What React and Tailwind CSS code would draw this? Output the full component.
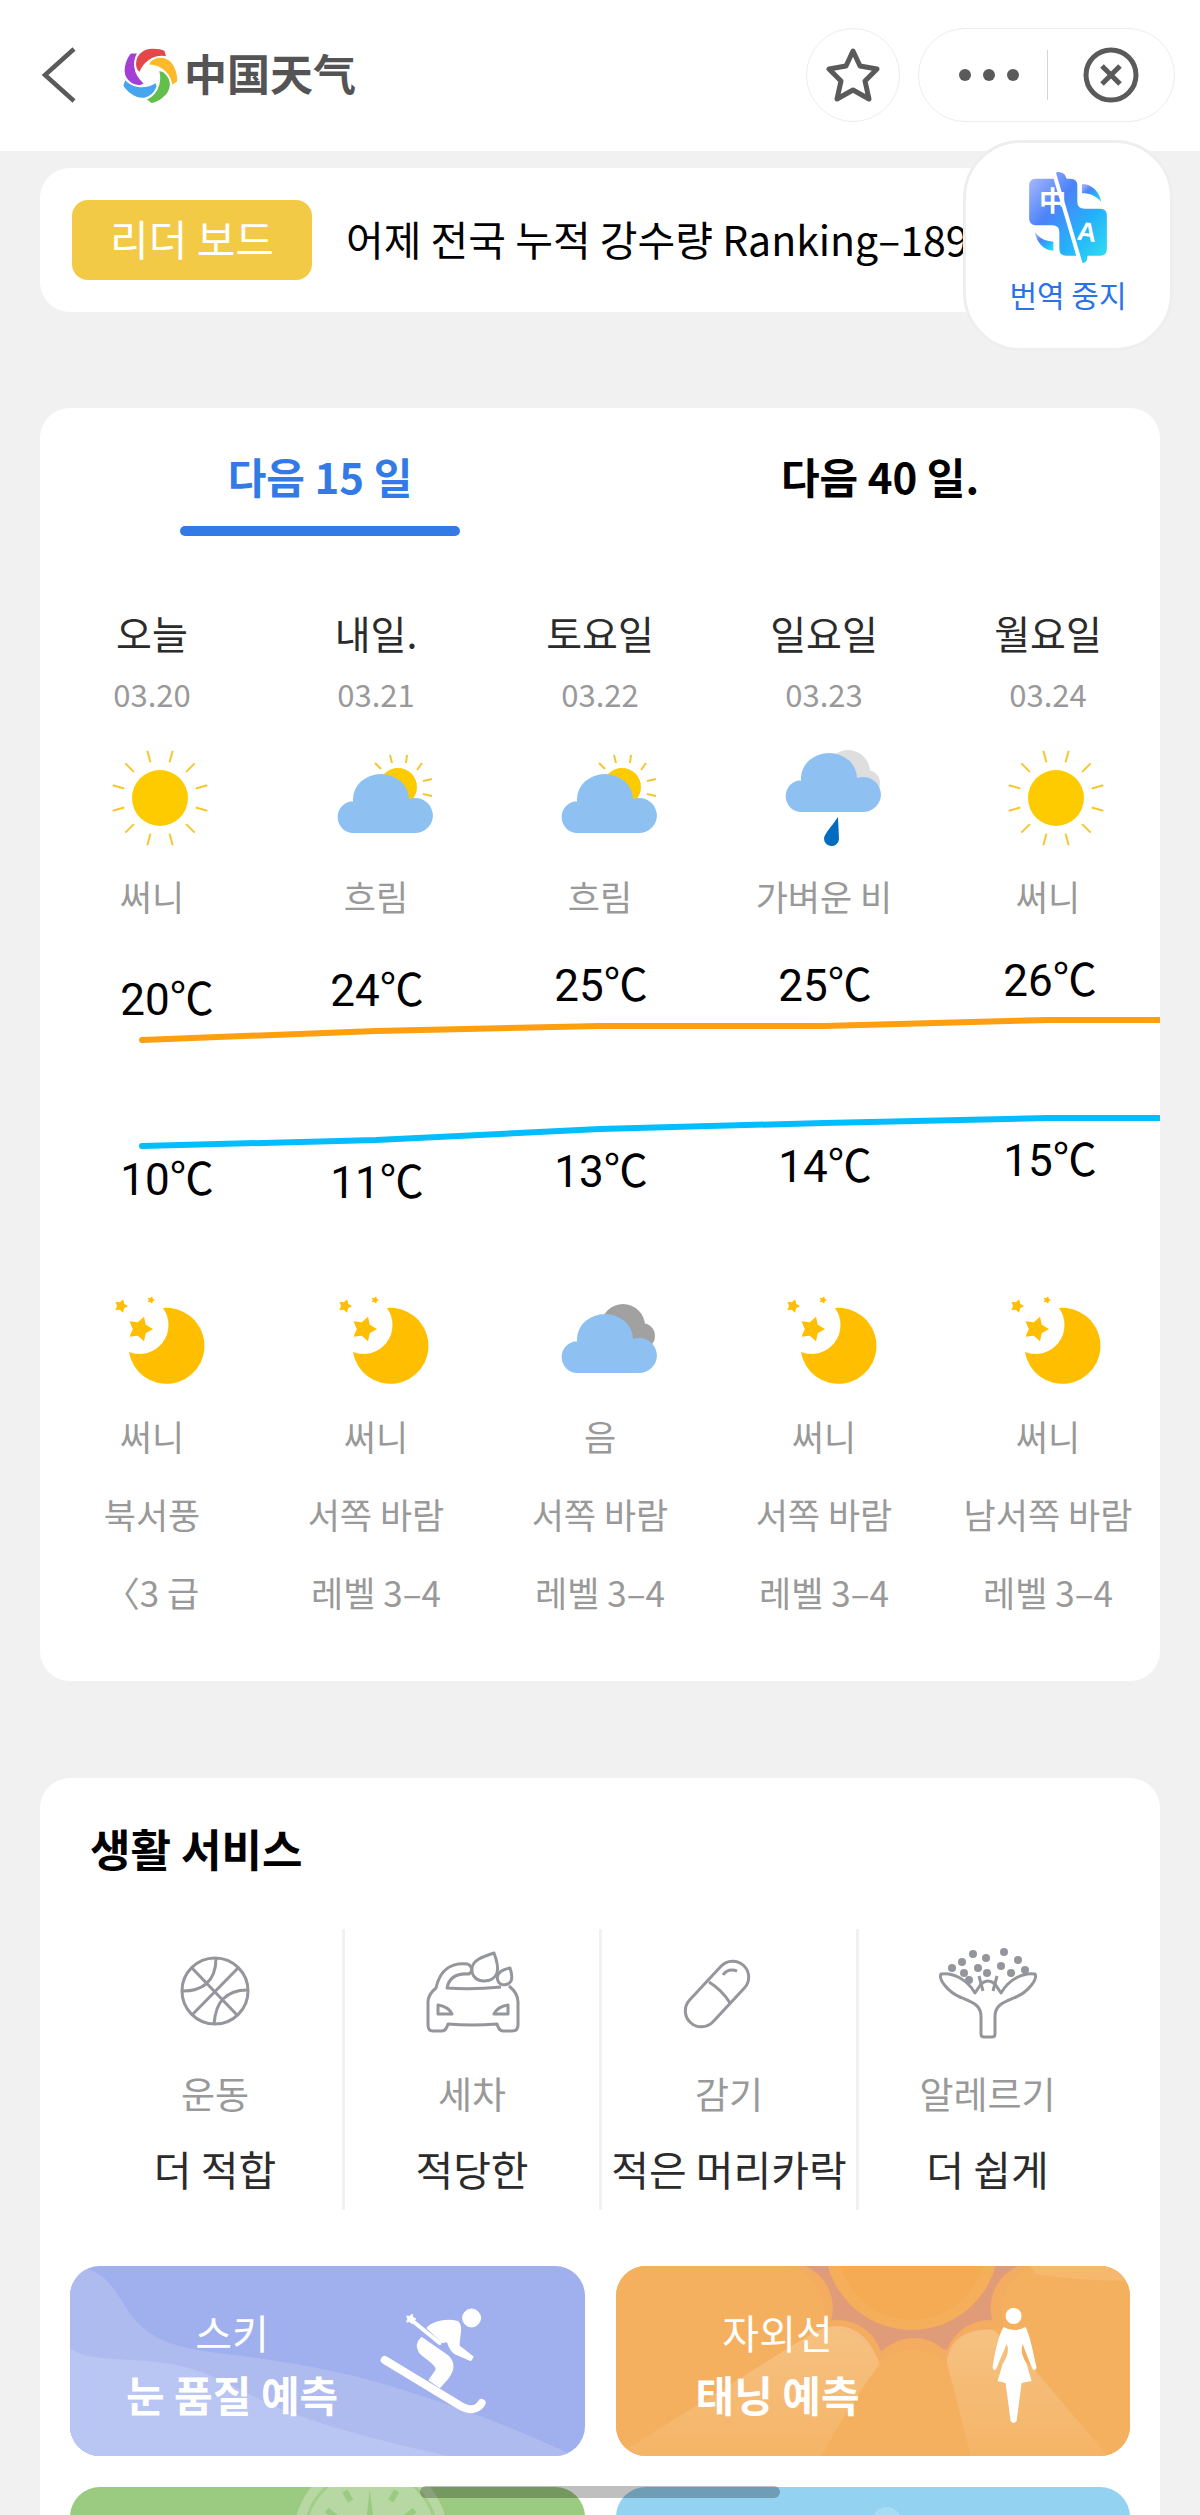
import { useState } from "react";

const days = [
  { name: "오늘", date: "03.20", icon: "sunny", text: "써니", night: "moon", nightText: "써니", wind: "북서풍", level: "〈3 급" },
  { name: "내일.", date: "03.21", icon: "cloudy", text: "흐림", night: "moon", nightText: "써니", wind: "서쪽 바람", level: "레벨 3–4" },
  { name: "토요일", date: "03.22", icon: "cloudy", text: "흐림", night: "overcast", nightText: "음", wind: "서쪽 바람", level: "레벨 3–4" },
  { name: "일요일", date: "03.23", icon: "rain", text: "가벼운 비", night: "moon", nightText: "써니", wind: "서쪽 바람", level: "레벨 3–4" },
  { name: "월요일", date: "03.24", icon: "sunny", text: "써니", night: "moon", nightText: "써니", wind: "남서쪽 바람", level: "레벨 3–4" },
];

const highs = [
  { x: 127, y: 85, label: "20℃" },
  { x: 337, y: 76, label: "24℃" },
  { x: 561, y: 71, label: "25℃" },
  { x: 785, y: 71, label: "25℃" },
  { x: 1010, y: 66, label: "26℃" },
];

const lows = [
  { x: 127, y: 265, label: "10℃" },
  { x: 337, y: 268, label: "11℃" },
  { x: 561, y: 257, label: "13℃" },
  { x: 785, y: 252, label: "14℃" },
  { x: 1010, y: 246, label: "15℃" },
];

const services = [
  { icon: "ball", name: "운동", value: "더 적합" },
  { icon: "car", name: "세차", value: "적당한" },
  { icon: "pill", name: "감기", value: "적은 머리카락" },
  { icon: "plant", name: "알레르기", value: "더 쉽게" },
];

const CLOUD =
  "M16 83 A16 16 0 0 1 14 51.500 H17 V49 A28 25 0 0 1 73 49 A18 17.500 0 1 1 78 83 Z";

function starPoints(cx, cy, r) {
  const points = [];
  for (let i = 0; i < 10; i++) {
    const radius = i % 2 === 0 ? r : r * 0.55;
    const angle = (i * Math.PI) / 5;
    points.push(`${cx + radius * Math.cos(angle)},${cy + radius * Math.sin(angle)}`);
  }
  return points.join(" ");
}

function Sunny() {
  return (
    <>
      <circle cx="48" cy="48" r="28" fill="#fecb00" />
      {[15, 45, 75, 105, 135, 165, 195, 225, 255, 285, 315, 345].map((a) => (
        <path key={a} d="M85 48 H97" stroke="#f5c72e" strokeWidth="2" transform={`rotate(${a} 48 48)`} />
      ))}
    </>
  );
}

function Cloudy() {
  return (
    <>
      <circle cx="62" cy="37" r="19" fill="#fecb00" />
      <path
        d="M39 13 L45 19 M54 5 L56 13 M71 5 L70 13 M86 13 L81 20 M96 29 L87 31 M96 46 L87 44"
        stroke="#f5c72e"
        strokeWidth="2"
      />
      <path d={CLOUD} fill="#8ec1f1" />
    </>
  );
}

function Rain() {
  return (
    <>
      <circle cx="64" cy="22" r="22" fill="#dedede" />
      <circle cx="83" cy="33" r="13" fill="#dedede" />
      <path d={CLOUD} fill="#8ec1f1" transform="translate(0 -21)" />
      <path d="M54 67 L55 89 A7.500 7.500 0 0 1 40 88 C41 83 48 76 54 67 Z" fill="#026dc0" />
    </>
  );
}

function Overcast() {
  return (
    <>
      <circle cx="63" cy="36" r="22" fill="#a1a1a1" />
      <circle cx="82" cy="46" r="13" fill="#a1a1a1" />
      <path d={CLOUD} fill="#8ec1f1" />
    </>
  );
}

function Moon() {
  return (
    <g fill="#ffbf00">
      <path d="M51 18 A38 38 0 1 1 17 62 A29 29 0 0 0 51 18 Z" />
      <polygon points={starPoints(28, 39, 13)} />
      <polygon points={starPoints(9, 16, 7)} />
      <polygon points={starPoints(39, 10, 4)} />
    </g>
  );
}

const weatherIcons = {
  sunny: Sunny,
  cloudy: Cloudy,
  rain: Rain,
  overcast: Overcast,
  moon: Moon,
};

function WeatherIcon({ type }) {
  const Shape = weatherIcons[type];
  return (
    <svg viewBox="0 0 96 96" className="ml-4 size-24 overflow-visible" aria-hidden="true">
      <Shape />
    </svg>
  );
}

function ServiceIcon({ type }) {
  return (
    <svg
      viewBox="0 0 100 100"
      className="size-[100px]"
      fill="none"
      stroke="#95969c"
      strokeWidth="3"
      strokeLinejoin="round"
      aria-hidden="true"
    >
      {type === "ball" && (
        <>
          <circle cx="50" cy="50" r="33" />
          <path d="M27 27 L72 74 M73 27 L27 74 M51 17 C51 30 47 38 41 43 C35 48 28 50 18 50 M49 83 C50 72 53 63 58 58 C64 52 72 49 82 49" />
        </>
      )}
      {type === "car" && (
        <>
          <path d="M46 23 C30 21 18 28 14 47 C9 51 6 55 6 61 V84 Q6 90 11 90 H20 Q24 90 26 83 Q50 85 75 83 Q77 90 81 90 H90 Q96 90 96 84 V61 C96 54 92 49 87 45" />
          <path d="M46 23 Q53 28 47 33 C34 32 27 37 25 47 Q50 49 79 46" />
          <path d="M72 12 Q77 25 75 32 C73 37 68 40 62 40 C54 40 49 34 50 27 C51 19 60 16 72 12 Z" />
          <path d="M88 27 Q91 36 89 40 C86 45 78 45 76 40 C73 32 80 29 88 27 Z" />
          <path d="M16 64 V73 H30 C28 69 23 65 16 64 Z M86 64 V73 H72 C74 69 79 65 86 64 Z" />
        </>
      )}
      {type === "pill" && (
        <>
          <rect x="-1" y="37" width="78" height="32" rx="16" transform="rotate(-47 38 53)" />
          <path d="M30 41 Q43 49 51 62" />
          <path d="M44 34 Q49 27 58 30" />
        </>
      )}
      {type === "plant" && (
        <>
          <path d="M37 52 C29 38 14 31 3 33 C0 38 10 51 22 56 C34 61 43 64 43 75 V93 Q43 96 46 96 H54 Q57 96 57 93 V75 C57 64 66 61 78 56 C90 51 100 38 97 33 C86 31 71 38 63 52 L57 43 Q50 37 43 43 Z" />
          <path d="M41 35 L45 50 M59 35 L55 50" />
          <g fill="#95969c" stroke="none">
            {[
              [35, 13], [66, 11], [48, 17], [24, 21], [80, 19], [63, 25], [14, 27],
              [40, 27], [87, 29], [26, 32], [49, 32], [73, 32], [31, 39],
            ].map(([x, y]) => (
              <circle key={`${x}-${y}`} cx={x} cy={y} r="4" />
            ))}
          </g>
        </>
      )}
    </svg>
  );
}

function Logo() {
  const blade =
    "M80 94 C74 60 96 36 132 36 C148 36 160 39 167 43 L173 63 C146 57 110 66 92 110 C85 106 81 100 80 94 Z";
  return (
    <svg viewBox="36 30 170 170" className="size-[57px]" aria-hidden="true">
      {["#e3474a", "#fcb92a", "#63bf4b", "#46a5ec", "#a43fd6"].map((color, i) => (
        <path
          key={color}
          d={blade}
          fill={color}
          stroke="#fff"
          strokeWidth="4"
          transform={`rotate(${i * 72} 121 116)`}
        />
      ))}
    </svg>
  );
}

function TranslateIcon() {
  return (
    <svg viewBox="36 30 246 280" className="h-[93px] w-[82px]" aria-hidden="true">
      <defs>
        <linearGradient id="tr" x1="0" y1="0" x2="1" y2="1">
          <stop offset="0" stopColor="#b4bdfc" />
          <stop offset="0.350" stopColor="#4b83f8" />
          <stop offset="0.650" stopColor="#25b0fb" />
          <stop offset="1" stopColor="#2fe3ee" />
        </linearGradient>
      </defs>
      <g fill="url(#tr)">
        <path d="M62 53 H120 V40 Q122 32 132 33 Q144 34 150 42 L155 53 H166 Q187 53 187 74 V122 Q187 144 209 144 H256 Q276 144 276 165 V264 Q276 285 256 285 H218 L216 298 Q210 308 200 308 L190 285 H154 Q133 285 133 264 V214 Q133 193 112 193 H62 Q42 193 42 173 V74 Q42 53 62 53 Z" />
        <path d="M201 69 C230 69 254 92 259 123 C243 104 225 97 201 97 Z" />
        <path d="M115 270 C86 270 65 246 59 214 C72 232 90 242 115 243 Z" />
      </g>
      <text x="72" y="150" fontSize="82" fontWeight="700" fill="#fff" className="font-['Noto_Sans_CJK_SC',sans-serif]">
        中
      </text>
      <text x="188" y="240" fontSize="80" fontWeight="700" fill="#fff" transform="rotate(8 215 210)" className="font-['Liberation_Sans',sans-serif]">
        A
      </text>
      <path d="M115 30 L198 312" stroke="#fff" strokeWidth="12" />
    </svg>
  );
}

function Header() {
  return (
    <header className="flex h-[151px] items-center bg-white pr-[25px] pb-0.5 pl-[35px]">
      <button type="button" aria-label="뒤로" className="flex h-16 w-12 items-center justify-center">
        <svg viewBox="0 0 36 56" className="h-14 w-9" fill="none" stroke="#5a5a5a" strokeWidth="4.500" aria-hidden="true">
          <path d="M33 2 L4 28 L33 54" />
        </svg>
      </button>
      <div className="ml-[38px] flex items-start gap-1.5">
        <Logo />
        <h1 className="font-['Noto_Sans_CJK_SC',sans-serif] text-[43px] leading-[52px] font-bold text-[#545454]">
          中国天气
        </h1>
      </div>
      <button
        type="button"
        aria-label="즐겨찾기"
        className="ml-auto flex size-[94px] items-center justify-center rounded-full border border-[#ededed]"
      >
        <svg viewBox="0 0 54 56" className="h-14 w-[54px]" fill="none" stroke="#5a5a5a" strokeWidth="5" strokeLinejoin="round" aria-hidden="true">
          <path d="M27 4 L34 19 L51 22 L39 34 L43 52 L27 43 L11 52 L15 34 L3 22 L20 19 Z" />
        </svg>
      </button>
      <div className="ml-[18px] flex h-[94px] w-[257px] items-center rounded-full border border-[#ededed]">
        <button type="button" aria-label="더보기" className="flex h-full w-32 items-center justify-end gap-3 pr-7">
          <span className="size-3 rounded-full bg-[#5a5a5a]" />
          <span className="size-3 rounded-full bg-[#5a5a5a]" />
          <span className="size-3 rounded-full bg-[#5a5a5a]" />
        </button>
        <span className="h-[50px] w-px bg-[#d4d4d4]" />
        <button type="button" aria-label="닫기" className="flex h-full flex-1 items-center justify-center">
          <svg viewBox="0 0 56 56" className="size-14" fill="none" stroke="#5a5a5a" strokeWidth="5" aria-hidden="true">
            <circle cx="28" cy="28" r="25" />
            <path d="M19 19 L37 37 M37 19 L19 37" />
          </svg>
        </button>
      </div>
    </header>
  );
}

function Forecast() {
  const [tab, setTab] = useState(0);

  return (
    <section className="overflow-hidden rounded-[30px] bg-white pb-[63px]">
      <div role="tablist" className="grid grid-cols-2">
        {["다음 15 일", "다음 40 일."].map((label, i) => (
          <button
            key={label}
            type="button"
            role="tab"
            aria-selected={tab === i}
            onClick={() => setTab(i)}
            className={`flex flex-col items-center pt-[38px] text-[42px] leading-[60px] font-bold ${
              tab === i ? "text-[#327be6]" : "text-black"
            }`}
          >
            {label}
            <span className={`mt-5 h-[10px] w-1/2 rounded-full ${tab === i ? "bg-[#327be6]" : "bg-transparent"}`} />
          </button>
        ))}
      </div>

      <ul className="mt-[70px] grid grid-cols-5 text-center text-[#999]">
        {days.map((day) => (
          <li key={day.date} className="flex flex-col items-center">
            <h2 className="text-[39px] leading-[52px] text-[#2b2b2b]">{day.name}</h2>
            <p className="mt-4 mb-9 text-[31px] leading-[40px]">{day.date}</p>
            <WeatherIcon type={day.icon} />
            <p className="mt-6 text-[35px] leading-[52px]">{day.text}</p>
          </li>
        ))}
      </ul>

      {/* 최고 / 최저 기온 */}
      <svg viewBox="0 0 1120 300" className="mt-2 w-full" role="img" aria-label="기온">
        <g fill="none" strokeWidth="6" strokeLinejoin="round" strokeLinecap="round">
          <path d="M102 110 L336 101 L560 96 L784 96 L1008 90 H1130" stroke="#fd9f0e" />
          <path d="M102 216 L336 210 L560 199 L784 193 L1008 188 H1130" stroke="#04bdfe" />
        </g>
        <g fontSize="44" textAnchor="middle" className="fill-black font-['Roboto','Noto_Sans_CJK_KR',sans-serif]">
          {[...highs, ...lows].map((t) => (
            <text key={`${t.x}-${t.y}`} x={t.x} y={t.y}>
              {t.label}
            </text>
          ))}
        </g>
      </svg>

      <ul className="mt-[60px] grid grid-cols-5 text-center text-[35px] leading-[52px] text-[#999]">
        {days.map((day) => (
          <li key={day.date} className="flex flex-col items-center gap-[26px]">
            <div className="flex flex-col items-center gap-6">
              <WeatherIcon type={day.night} />
              <p>{day.nightText}</p>
            </div>
            <p className="whitespace-nowrap">{day.wind}</p>
            <p className="whitespace-nowrap">{day.level}</p>
          </li>
        ))}
      </ul>
    </section>
  );
}

function Banner({ className, title, subtitle, children }) {
  return (
    <a href="#" className={`relative block h-[190px] overflow-hidden rounded-[30px] text-white ${className}`}>
      <svg viewBox="0 0 515 190" preserveAspectRatio="none" className="absolute inset-0 size-full" aria-hidden="true">
        {children}
      </svg>
      {title && (
        <div className="relative w-[63%] pt-10 text-center">
          <p className="text-[40px] leading-[52px]">{title}</p>
          <p className="mt-2 text-[42px] leading-[56px] font-bold">{subtitle}</p>
        </div>
      )}
    </a>
  );
}

function LifeServices() {
  return (
    <section className="rounded-[30px] bg-white px-[30px] pt-10 pb-[30px]">
      <h2 className="px-5 text-[44px] leading-[60px] font-bold">생활 서비스</h2>

      <ul className="mt-[51px] mr-3.5 ml-[18px] grid grid-cols-4 divide-x-3 divide-[#f1f1f1] text-center">
        {services.map((s) => (
          <li key={s.name} className="flex flex-col items-center pt-3 pb-[13px]">
            <ServiceIcon type={s.icon} />
            <p className="mt-[26px] text-[37px] leading-[52px] text-[#999]">{s.name}</p>
            <p className="mt-5 text-[41px] leading-[58px] whitespace-nowrap text-[#2b2b2b]">{s.value}</p>
          </li>
        ))}
      </ul>

      <div className="mt-14 grid grid-cols-2 gap-[31px]">
        <Banner className="bg-[#a0afed]" title="스키" subtitle="눈 품질 예측">
          <path d="M0 0 C30 2 40 15 55 40 C75 72 100 80 140 86 C200 93 270 103 340 126 C400 145 455 166 505 190 H0 Z" fill="#aebbef" />
          <path d="M0 82 C20 96 50 91 95 97 C150 105 175 132 236 152 C290 170 335 180 378 190 H0 Z" fill="#b9c5f2" />
          <g fill="#fff" stroke="#fff" strokeLinejoin="round" strokeLinecap="round">
            <circle cx="402" cy="52" r="9" />
            <path d="M343 55 L370 77" strokeWidth="4" />
            <polygon points={starPoints(341, 53, 5)} />
            <path d="M358 62 C366 54 380 54 388 56 C393 60 389 70 389 80 L403 91 L401 94 L385 87 C380 83 379 78 378 75 L373 76 Z" strokeWidth="2" />
            <path d="M352 72 L378 90 C386 98 383 105 378 112 L370 121 L360 114 L367 104 C368 98 355 92 350 86 C347 81 348 76 352 72 Z" strokeWidth="2" />
            <path d="M315 94 L391 140 C400 145 408 144 412 137" fill="none" strokeWidth="8" />
          </g>
        </Banner>

        <Banner className="bg-[#f4b05e]" title="자외선" subtitle="태닝 예측">
          <defs>
            <linearGradient id="ray" x1="0" y1="0" x2="0" y2="1">
              <stop offset="0" stopColor="#fff" stopOpacity="0.220" />
              <stop offset="1" stopColor="#fff" stopOpacity="0.060" />
            </linearGradient>
          </defs>
          <circle cx="296" cy="-23" r="112" fill="#e09b78" />
          <g fill="#f3ac60">
            <circle cx="171" cy="42" r="46" />
            <circle cx="421" cy="42" r="46" />
            <circle cx="222" cy="99" r="45" />
            <circle cx="374" cy="99" r="45" />
            <circle cx="298" cy="117" r="45" />
          </g>
          <path d="M0 0 H165 C195 2 212 25 208 60 C240 62 258 84 264 98 C270 88 285 84 298 84 C312 84 325 88 331 98 C336 78 350 62 388 62 C380 30 395 2 430 0 H515 V190 H0 Z" fill="#f4b05e" />
          <circle cx="296" cy="-23" r="87" fill="#f5ae59" />
          <circle cx="296" cy="-20" r="74" fill="#f5ab53" />
          <path d="M221 60 C245 60 258 80 264 98 C240 130 222 160 206 190 H0 L171 83 C190 72 205 60 221 60 Z" fill="url(#ray)" />
          <path d="M331 95 C334 72 352 62 378 64 L420 105 L492 190 H355 Z" fill="url(#ray)" />
          <path d="M414 0 L420 8 Q465 15 515 15 V0 Z" fill="#f6b86e" />
          <g fill="#fff">
            <circle cx="398" cy="50" r="8" />
            <path d="M388 61 Q398 67 410 61 C414 68 418 88 421 102 Q418 107 416 101 L407 78 Q404 86 411 98 L416 115 L406 117 L401 155 Q398 159 395 155 L390 117 L382 115 L387 98 Q395 86 391 78 L381 102 Q378 107 377 101 C379 88 383 68 388 61 Z" />
          </g>
        </Banner>

        <Banner className="bg-[#9bcb80]">
          <circle cx="301" cy="49" r="77" fill="#b7d8a3" />
          <circle cx="301" cy="49" r="66" fill="none" stroke="#a2ce89" strokeWidth="3" />
          <path d="M275 4 L281 14 M327 4 L321 14 M257 23 L267 31 M345 23 L335 31" stroke="#9bcb80" strokeWidth="6" />
          <path d="M300 2 L306 49 L295 49 Z" fill="#9bcb80" />
        </Banner>

        <Banner className="bg-[#94d2f2]">
          <circle cx="271" cy="34" r="14" fill="#a9dbf4" />
        </Banner>
      </div>
    </section>
  );
}

export default function App() {
  return (
    <div className="relative h-screen overflow-hidden bg-[#f1f1f1] font-['Noto_Sans_CJK_KR',sans-serif] text-black">
      <Header />

      <main className="flex flex-col px-10 pt-[17px]">
        <section className="flex h-36 items-center gap-[34px] overflow-hidden rounded-[30px] bg-white px-8">
          <span className="flex h-20 w-60 shrink-0 justify-center rounded-2xl bg-[#f3ca45] text-[42px] leading-[76px] text-white">
            리더 보드
          </span>
          <a href="#" className="pb-1 text-[41px] leading-[60px] whitespace-nowrap">
            어제 전국 누적 강수량 Ranking–189
          </a>
        </section>

        <div className="mt-24">
          <Forecast />
        </div>
        <div className="mt-[97px]">
          <LifeServices />
        </div>
      </main>

      <button
        type="button"
        className="absolute top-[140px] right-[27px] flex h-[211px] w-[210px] flex-col items-center rounded-[58px] border-3 border-[#eee] bg-white pt-7"
      >
        <TranslateIcon />
        <span className="mt-2.5 text-[30px] leading-[40px] text-[#2a72e8]">번역 중지</span>
      </button>

      <div className="absolute bottom-[17px] left-1/2 h-3 w-[30%] -translate-x-1/2 rounded-full bg-black/25" />
    </div>
  );
}
